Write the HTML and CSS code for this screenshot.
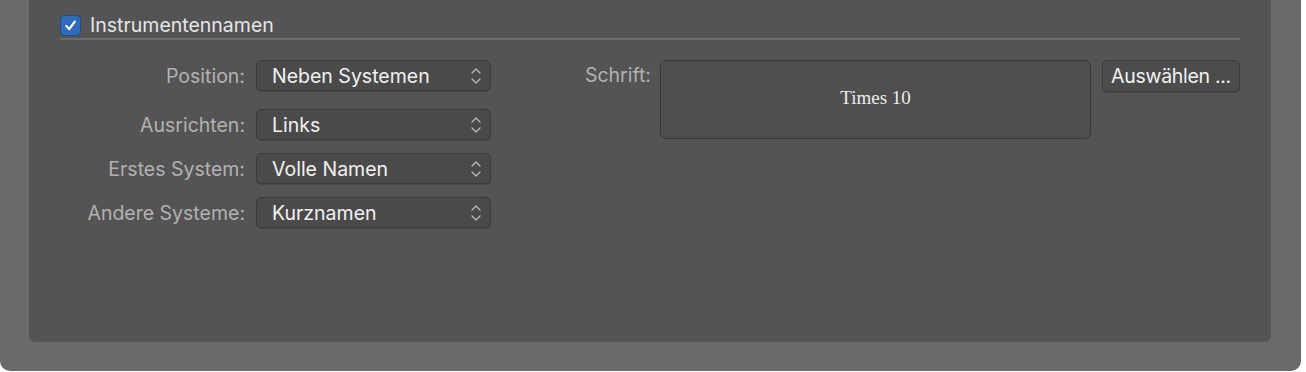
FILE: index.html
```html
<!DOCTYPE html>
<html lang="de">
<head>
<meta charset="utf-8">
<link rel="stylesheet" href="styles.css">
</head>
<body>
<div class="window">
  <div class="panel">
    <div class="header">
      <span class="checkbox">
        <svg width="15" height="15" viewBox="0 0 14 14"><path d="M3 7.4 L5.8 10.4 L11 3.4" fill="none" stroke="#fff" stroke-width="2" stroke-linecap="round" stroke-linejoin="round"/></svg>
      </span>
      <span class="header-title">Instrumentennamen</span>
    </div>
    <div class="form">
      <div class="left">
        <div class="row first">
          <span class="label">Position:</span>
          <div class="popup"><span>Neben Systemen</span><svg class="chev" width="12" height="20" viewBox="0 0 12 20"><path d="M2 7 L6 3 L10 7 M2 13 L6 17 L10 13" fill="none" stroke="#bdbdbd" stroke-width="1.2" stroke-linecap="round" stroke-linejoin="round"/></svg></div>
        </div>
        <div class="row">
          <span class="label">Ausrichten:</span>
          <div class="popup"><span>Links</span><svg class="chev" width="12" height="20" viewBox="0 0 12 20"><path d="M2 7 L6 3 L10 7 M2 13 L6 17 L10 13" fill="none" stroke="#bdbdbd" stroke-width="1.2" stroke-linecap="round" stroke-linejoin="round"/></svg></div>
        </div>
        <div class="row">
          <span class="label">Erstes System:</span>
          <div class="popup"><span>Volle Namen</span><svg class="chev" width="12" height="20" viewBox="0 0 12 20"><path d="M2 7 L6 3 L10 7 M2 13 L6 17 L10 13" fill="none" stroke="#bdbdbd" stroke-width="1.2" stroke-linecap="round" stroke-linejoin="round"/></svg></div>
        </div>
        <div class="row">
          <span class="label">Andere Systeme:</span>
          <div class="popup"><span>Kurznamen</span><svg class="chev" width="12" height="20" viewBox="0 0 12 20"><path d="M2 7 L6 3 L10 7 M2 13 L6 17 L10 13" fill="none" stroke="#bdbdbd" stroke-width="1.2" stroke-linecap="round" stroke-linejoin="round"/></svg></div>
        </div>
      </div>
      <div class="right">
        <span class="label font-label">Schrift:</span>
        <div class="fontbox">Times 10</div>
        <div class="button">Auswählen ...</div>
      </div>
    </div>
  </div>
</div>
</body>
</html>
```

FILE: styles.css
```css
html, body {
  margin: 0;
  padding: 0;
  background: #ffffff;
}
body {
  font-family: Inter, "Noto Sans", "Liberation Sans", sans-serif;
  font-size: 19.5px;
}
.window {
  width: 1301px;
  height: 371px;
  background: #6a6a6a;
  border-radius: 0 0 10px 10px;
  overflow: hidden;
}
.panel {
  margin-left: 29px;
  width: 1242px;
  height: 342px;
  background: #545454;
  border-radius: 0 0 6px 6px;
  box-sizing: border-box;
  padding-left: 31px;
  padding-right: 31px;
}
.header {
  display: flex;
  align-items: center;
  gap: 9px;
  padding-top: 12px;
  height: 26px;
  border-bottom: 2px solid #6c6c6c;
}
.checkbox {
  flex: none;
  width: 21px;
  height: 21px;
  box-sizing: border-box;
  border-radius: 4px;
  background: #2f6bb8;
  border: 1px solid #214a80;
  display: flex;
  align-items: center;
  justify-content: center;
}
.header-title {
  color: #e6e6e6;
  line-height: 22px;
}
.form {
  display: flex;
  padding-top: 20px;
}
.left {
  display: flex;
  flex-direction: column;
  gap: 13px;
}
.left .row.first {
  margin-bottom: 5px;
}
.row {
  display: flex;
  align-items: center;
  gap: 11px;
}
.label {
  color: #b2b2b2;
  text-align: right;
  white-space: nowrap;
}
.left .label {
  width: 185px;
}
.popup {
  flex: none;
  width: 235px;
  height: 31px;
  box-sizing: border-box;
  background: #4a4a4a;
  border: 1px solid #3b3b3b;
  border-radius: 5px;
  box-shadow: 0 1px 0 rgba(0,0,0,0.15);
  display: flex;
  align-items: center;
  justify-content: space-between;
  padding: 0 8px 0 15px;
  color: #f2f2f2;
}
.right {
  display: flex;
  align-items: flex-start;
  margin-left: 92px;
}
.font-label {
  padding-top: 3px;
  width: 68px;
}
.fontbox {
  flex: none;
  margin-left: 9px;
  width: 431px;
  height: 79px;
  box-sizing: border-box;
  background: #4f4f4f;
  border: 1px solid #383838;
  border-radius: 6px;
  color: #ececec;
  font-family: "Liberation Serif", "DejaVu Serif", serif;
  font-size: 19px;
  text-align: center;
  padding-top: 26px;
}
.button {
  flex: none;
  margin-left: 11px;
  height: 32px;
  box-sizing: border-box;
  background: #4c4c4c;
  border: 1px solid #3b3b3b;
  border-radius: 5px;
  box-shadow: 0 1px 0 rgba(0,0,0,0.15);
  color: #f2f2f2;
  padding: 0;
  display: flex;
  align-items: center;
  justify-content: center;
  width: 138px;
  white-space: nowrap;
  letter-spacing: -0.3px;
}
```
